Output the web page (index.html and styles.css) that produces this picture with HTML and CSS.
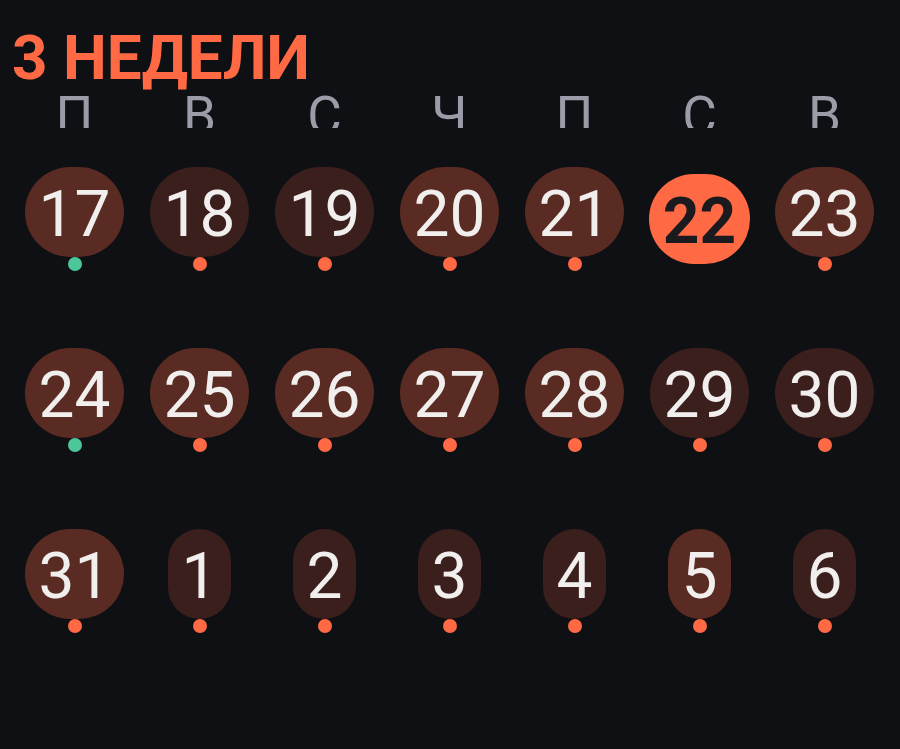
FILE: index.html
```html
<!DOCTYPE html>
<html lang="ru">
<head>
<meta charset="utf-8">
<link rel="stylesheet" href="styles.css">
</head>
<body>
<div class="cal">
  <h1 class="title">3 НЕДЕЛИ</h1>
  <div class="weekdays">
    <span>П</span><span>В</span><span>С</span><span>Ч</span><span>П</span><span>С</span><span>В</span>
  </div>
  <div class="grid">
    <div class="cell"><div class="pill hi">17</div><div class="dot green"></div></div>
    <div class="cell"><div class="pill lo">18</div><div class="dot"></div></div>
    <div class="cell"><div class="pill lo">19</div><div class="dot"></div></div>
    <div class="cell"><div class="pill hi">20</div><div class="dot"></div></div>
    <div class="cell"><div class="pill hi">21</div><div class="dot"></div></div>
    <div class="cell"><div class="pill today">22</div></div>
    <div class="cell"><div class="pill hi">23</div><div class="dot"></div></div>

    <div class="cell"><div class="pill hi">24</div><div class="dot green"></div></div>
    <div class="cell"><div class="pill hi">25</div><div class="dot"></div></div>
    <div class="cell"><div class="pill hi">26</div><div class="dot"></div></div>
    <div class="cell"><div class="pill hi">27</div><div class="dot"></div></div>
    <div class="cell"><div class="pill hi">28</div><div class="dot"></div></div>
    <div class="cell"><div class="pill lo">29</div><div class="dot"></div></div>
    <div class="cell"><div class="pill lo">30</div><div class="dot"></div></div>

    <div class="cell"><div class="pill hi">31</div><div class="dot"></div></div>
    <div class="cell"><div class="pill lo">1</div><div class="dot"></div></div>
    <div class="cell"><div class="pill lo">2</div><div class="dot"></div></div>
    <div class="cell"><div class="pill lo">3</div><div class="dot"></div></div>
    <div class="cell"><div class="pill lo">4</div><div class="dot"></div></div>
    <div class="cell"><div class="pill hi">5</div><div class="dot"></div></div>
    <div class="cell"><div class="pill lo">6</div><div class="dot"></div></div>
  </div>
</div>
</body>
</html>
```

FILE: styles.css
```css
html, body {
  margin: 0;
  padding: 0;
  background: #0f1014;
  height: 100%;
}

body {
  font-family: Roboto, "Noto Sans", sans-serif;
}

.cal {
  padding: 22px 13px 0 12px;
}

.title {
  margin: 0;
  font-size: 62px;
  font-weight: 700;
  line-height: 1.172;
  color: #ff6a45;
  letter-spacing: 0;
  height: 63px;
}

.weekdays {
  display: grid;
  grid-template-columns: repeat(7, 125px);
  height: 43px;
  overflow: hidden;
}

.weekdays span {
  text-align: center;
  font-size: 53px;
  line-height: 1.172;
  color: #9a9ca8;
}

.grid {
  display: grid;
  grid-template-columns: repeat(7, 125px);
  grid-auto-rows: 181px;
}

.cell {
  display: flex;
  flex-direction: column;
  align-items: center;
  justify-content: center;
}

.pill {
  height: 90px;
  padding: 0 14px;
  border-radius: 999px;
  font-size: 64px;
  line-height: 96px;
  color: #f1eeee;
  text-align: center;
}

.pill.hi {
  background: #5a2b22;
}

.pill.lo {
  background: #3b1f1c;
}

.pill.today {
  background: #ff6a45;
  color: #1b1a1e;
  font-weight: 700;
}

.dot {
  width: 14px;
  height: 14px;
  border-radius: 50%;
  background: #ff6a45;
}

.dot.green {
  background: #4cc79a;
}
```
